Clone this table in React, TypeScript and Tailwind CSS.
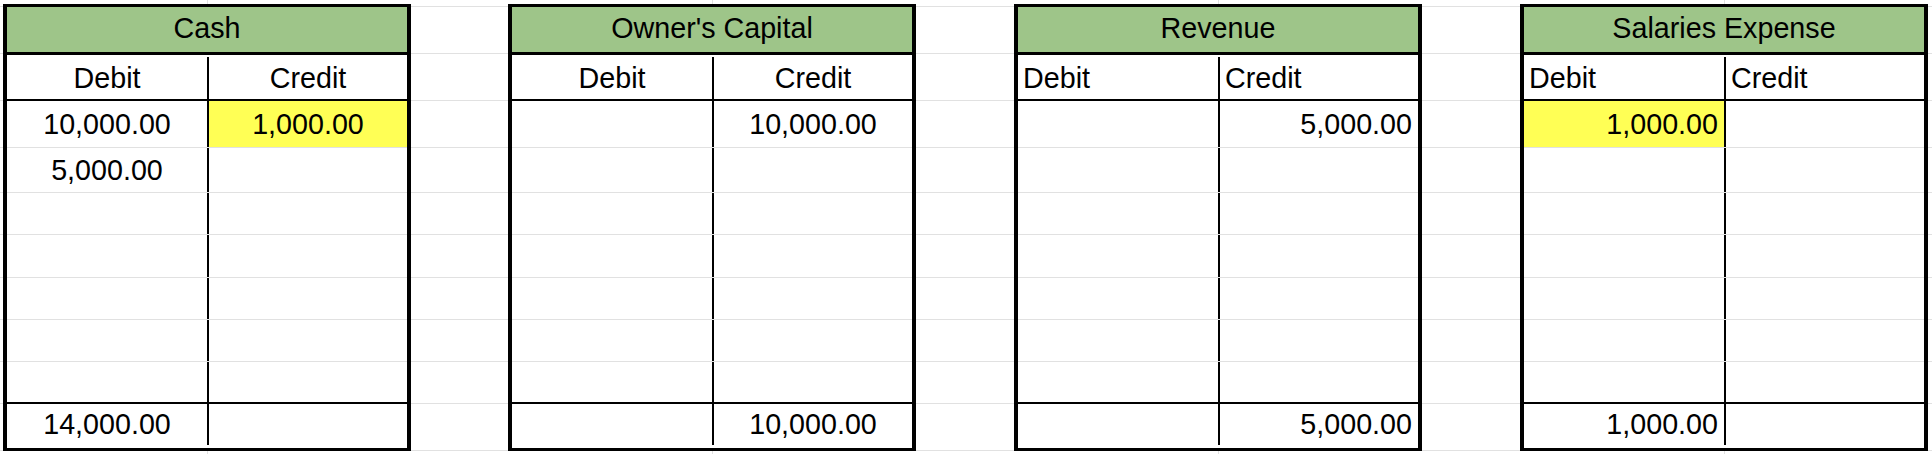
type Account = {
  title: string;
  split: boolean;
  rows: [string, string][];
  total: [string, string];
  hl?: [number, number];
};

const accounts: Account[] = [
  {
    title: "Cash",
    split: false,
    rows: [
      ["10,000.00", "1,000.00"],
      ["5,000.00", ""],
    ],
    total: ["14,000.00", ""],
    hl: [0, 1],
  },
  {
    title: "Owner's Capital",
    split: false,
    rows: [["", "10,000.00"]],
    total: ["", "10,000.00"],
  },
  {
    title: "Revenue",
    split: true,
    rows: [["", "5,000.00"]],
    total: ["", "5,000.00"],
  },
  {
    title: "Salaries Expense",
    split: true,
    rows: [["1,000.00", ""]],
    total: ["1,000.00", ""],
    hl: [0, 0],
  },
];

// heights of the body rows, gray line included
const bodyRows = [
  "h-[47px] border-b border-[#e1e1e1]",
  "h-[45px] border-b border-[#e1e1e1]",
  "h-[42px] border-b border-[#e1e1e1]",
  "h-[43px] border-b border-[#e1e1e1]",
  "h-[42px] border-b border-[#e1e1e1]",
  "h-[42px] border-b border-[#e1e1e1]",
  "h-[40px]",
];

const gapRows = [
  "h-[7px]",
  "h-[47px]",
  "h-[47px]",
  "h-[47px]",
  "h-[45px]",
  "h-[42px]",
  "h-[43px]",
  "h-[42px]",
  "h-[42px]",
  "h-[42px]",
  "h-[47px]",
];

function Gap({ w }: { w: string }) {
  return (
    <div className={`flex shrink-0 flex-col ${w}`}>
      {gapRows.map((h, i) => (
        <div key={i} className={`${h} border-b border-[#e1e1e1]`} />
      ))}
    </div>
  );
}

function Cell({
  text,
  left,
  split,
  label,
  yellow,
}: {
  text: string;
  left: boolean;
  split: boolean;
  label?: boolean;
  yellow?: boolean;
}) {
  const align = !split
    ? "justify-center"
    : label
      ? "justify-start pl-[5px]"
      : "justify-end pr-[6px]";
  return (
    <div
      className={`flex h-full items-center ${align} ${
        left ? "w-[202px] shrink-0 border-r-2 border-black" : "flex-1"
      } ${yellow ? "bg-[#ffff55]" : ""}`}
    >
      {text}
    </div>
  );
}

function TAccount({ acc }: { acc: Account }) {
  const body = bodyRows.map((_, i) => acc.rows[i] ?? ["", ""]);
  return (
    <div className="flex w-[408px] shrink-0 flex-col">
      <div className="flex h-[4px]">
        <div className="w-[205px] border-r border-[#e1e1e1]" />
      </div>
      <div className="flex flex-col border-x-4 border-y-[3px] border-black">
        <div className="flex h-[48px] items-center justify-center border-b-[3px] border-black bg-[#9ec589] pb-[3px]">
          {acc.title}
        </div>
        <div className="flex h-[46px] border-b-2 border-black pt-[2px]">
          <Cell text="Debit" left split={acc.split} label />
          <Cell text="Credit" left={false} split={acc.split} label />
        </div>
        {body.map((r, i) => (
          <div key={i} className={`flex ${bodyRows[i]}`}>
            <Cell
              text={r[0]}
              left
              split={acc.split}
              yellow={acc.hl?.[0] === i && acc.hl?.[1] === 0}
            />
            <Cell
              text={r[1]}
              left={false}
              split={acc.split}
              yellow={acc.hl?.[0] === i && acc.hl?.[1] === 1}
            />
          </div>
        ))}
        <div className="flex h-[46px] border-t-2 border-black pb-[3px]">
          <Cell text={acc.total[0]} left split={acc.split} />
          <Cell text={acc.total[1]} left={false} split={acc.split} />
        </div>
      </div>
      <div className="flex flex-1">
        <div className="w-[205px] border-r border-[#e1e1e1]" />
      </div>
    </div>
  );
}

export default function App() {
  return (
    <div className="flex h-[454px] w-[1932px] overflow-hidden bg-white font-['Liberation_Sans',Arial,sans-serif] text-[28.7px] leading-none text-black">
      <Gap w="w-[3px]" />
      <TAccount acc={accounts[0]} />
      <Gap w="w-[97px]" />
      <TAccount acc={accounts[1]} />
      <Gap w="w-[98px]" />
      <TAccount acc={accounts[2]} />
      <Gap w="w-[98px]" />
      <TAccount acc={accounts[3]} />
      <div className="flex-1">
        <Gap w="w-full" />
      </div>
    </div>
  );
}
